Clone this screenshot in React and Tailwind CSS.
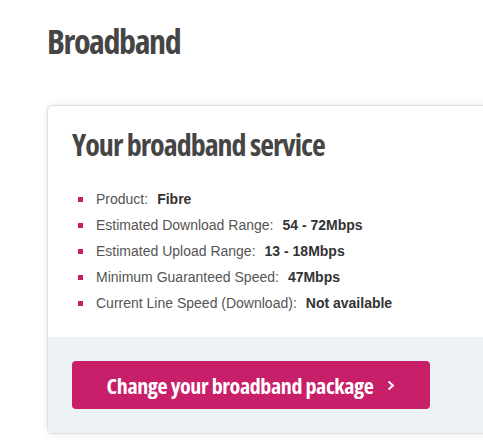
import React from 'react'

const narrow = { fontFamily: '"Open Sans", "Liberation Sans", sans-serif', fontStretch: 'condensed' }

const rows = [
    { label: 'Product:', value: 'Fibre' },
    { label: 'Estimated Download Range:', value: '54 - 72Mbps' },
    { label: 'Estimated Upload Range:', value: '13 - 18Mbps' },
    { label: 'Minimum Guaranteed Speed:', value: '47Mbps' },
    { label: 'Current Line Speed (Download):', value: 'Not available' },
]

export default function App() {
    return (
        <div className="w-full h-[440px] overflow-hidden bg-white pl-[47px] pt-[24px]" style={{ fontFamily: '"Liberation Sans", Arial, sans-serif' }}>
            <h1 className="text-[34px] leading-none font-bold text-[#454545] tracking-[-1.4px]" style={narrow}>
                Broadband
            </h1>
            <section className="mt-[47px] w-[560px] shrink-0 rounded-[6px] border border-[#dedede] bg-white shadow-[0_0_6px_rgba(0,0,0,0.1)] overflow-hidden">
                <div className="px-6 pt-[24px] pb-6">
                    <h2 className="text-[30px] leading-none font-bold text-[#454545] tracking-[-1px]" style={narrow}>
                        Your broadband service
                    </h2>
                    <ul className="mt-[29px] flex flex-col gap-[6px] pl-[6px]">
                        {rows.map((row) => (
                            <li key={row.label} className="flex items-center text-[14px] leading-5">
                                <span className="w-[5px] h-[5px] bg-[#c81f6a] mr-[13px] shrink-0" />
                                <span className="text-[#555]">{row.label}</span>
                                <span className="ml-[9px] font-bold text-[#333]">{row.value}</span>
                            </li>
                        ))}
                    </ul>
                </div>
                <div className="bg-[#edf2f5] px-6 py-6">
                    <button className="w-[358px] h-12 rounded-[4px] bg-[#c81f6a] text-white flex items-center justify-center gap-[14px]">
                        <span className="text-[22px] font-bold leading-none tracking-[-0.4px] whitespace-nowrap" style={narrow}>
                            Change your broadband package
                        </span>
                        <svg width="8" height="11" viewBox="0 0 8 11" fill="none" className="shrink-0">
                            <path d="M1.5 1.5 L6 5.5 L1.5 9.5" stroke="white" strokeWidth="2" />
                        </svg>
                    </button>
                </div>
            </section>
        </div>
    )
}
